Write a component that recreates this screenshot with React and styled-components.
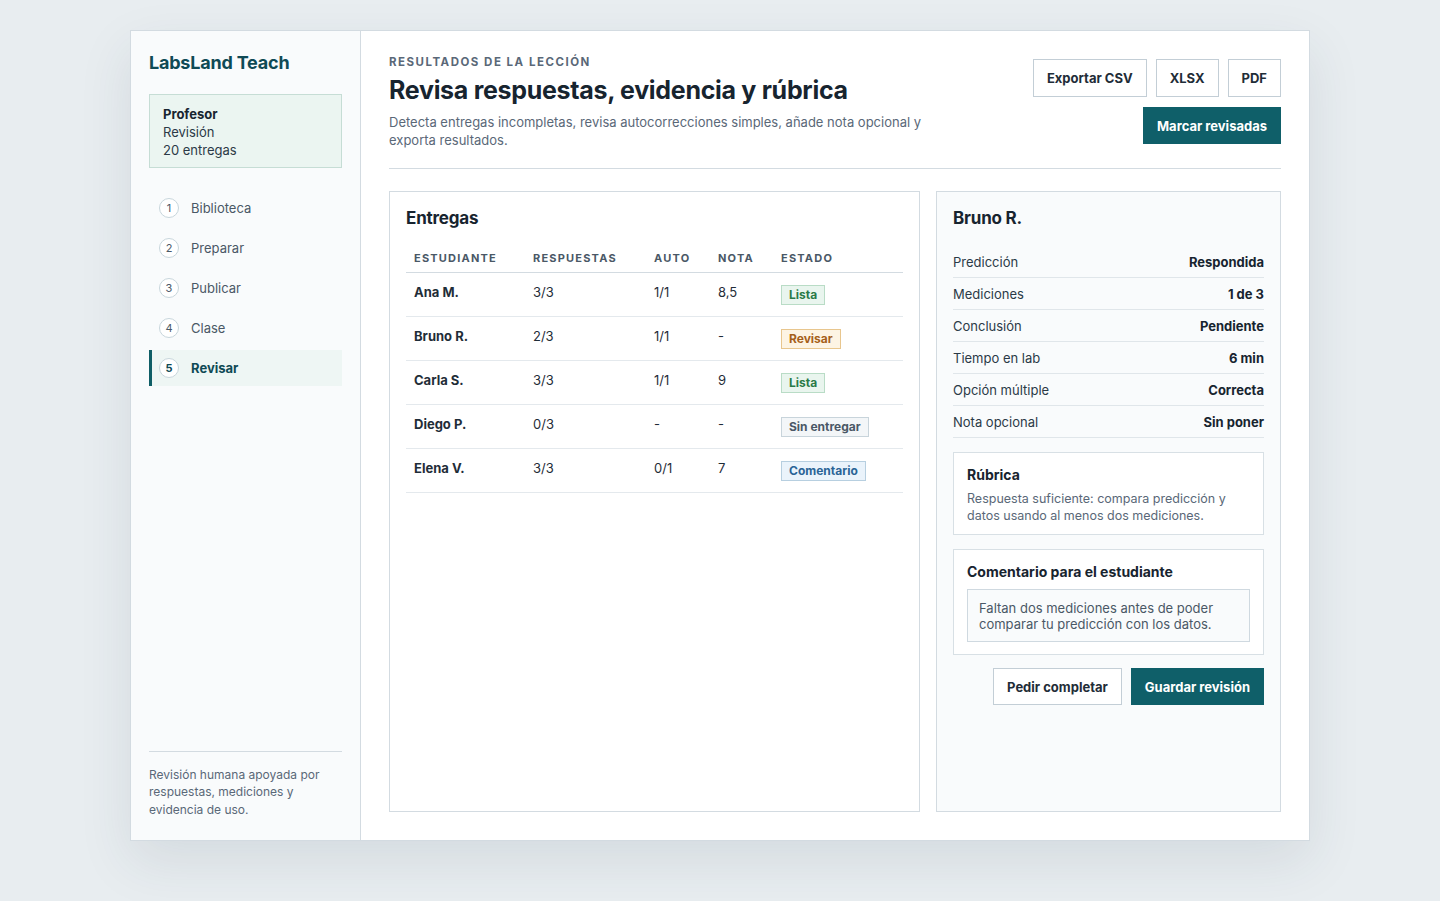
import styled, { createGlobalStyle } from 'styled-components'

const GlobalStyle = createGlobalStyle`
  * { box-sizing: border-box; }
  body {
    margin: 0;
    background: #e8edf0;
    font-family: Inter, "Noto Sans", "Liberation Sans", sans-serif;
    color: #17242f;
  }
`

const Page = styled.div`
  min-height: 901px;
  padding: 30px 130px 61px;
`

const Frame = styled.div`
  display: grid;
  grid-template-columns: 230px 1fr;
  height: 811px;
  background: #fff;
  border: 1px solid #d3dbe1;
  box-shadow: 0 20px 50px rgba(40, 60, 80, 0.1);
`

const Sidebar = styled.aside`
  display: flex;
  flex-direction: column;
  background: #f9fbfc;
  border-right: 1px solid #d3dbe1;
  padding: 20px 18px 22px;
`

const Logo = styled.div`
  font-size: 18px;
  font-weight: 700;
  color: #0f4a55;
  letter-spacing: -0.2px;
  line-height: 24px;
`

const RoleBox = styled.div`
  margin-top: 19px;
  padding: 10px 13px 8px;
  background: #ebf5f1;
  border: 1px solid #c6ddd5;
  font-size: 13px;
  line-height: 18px;
  color: #2b3a47;

  strong {
    display: block;
    color: #17242f;
  }
`

const Nav = styled.nav`
  display: flex;
  flex-direction: column;
  margin-top: 22px;
`

const NavItem = styled.div`
  display: flex;
  align-items: center;
  gap: 12px;
  height: 36px;
  margin-bottom: 4px;
  padding-left: ${p => (p.$active ? '7px' : '10px')};
  border-left: ${p => (p.$active ? '3px solid #0f5e66' : 'none')};
  background: ${p => (p.$active ? '#eef6f4' : 'transparent')};
  font-size: 13px;
  font-weight: ${p => (p.$active ? 700 : 400)};
  color: ${p => (p.$active ? '#0f4a55' : '#4a5866')};
`

const StepDot = styled.span`
  display: inline-flex;
  align-items: center;
  justify-content: center;
  width: 20px;
  height: 20px;
  border-radius: 50%;
  border: 1px solid #c8d6dc;
  background: #fff;
  font-size: 11px;
  font-weight: ${p => (p.$active ? 700 : 400)};
  color: ${p => (p.$active ? '#0f4a55' : '#4a5866')};
`

const SideFoot = styled.div`
  margin-top: auto;
  padding-top: 14px;
  border-top: 1px solid #d3dbe1;
  font-size: 12px;
  line-height: 17.5px;
  color: #5a6878;
`

const Main = styled.main`
  display: flex;
  flex-direction: column;
  padding: 23px 28px 28px;
  min-width: 0;
`

const Header = styled.header`
  display: flex;
  justify-content: space-between;
  align-items: flex-start;
  padding-bottom: 19px;
  border-bottom: 1px solid #d3dbe1;
`

const Eyebrow = styled.div`
  font-size: 11.5px;
  font-weight: 700;
  letter-spacing: 1.5px;
  color: #5a6878;
  line-height: 16px;
`

const Title = styled.h1`
  margin: 5px 0 8px;
  font-size: 25px;
  font-weight: 700;
  letter-spacing: -0.3px;
  line-height: 30px;
  color: #17242f;
`

const Lead = styled.p`
  margin: 0;
  max-width: 540px;
  font-size: 13px;
  line-height: 18px;
  color: #5a6878;
`

const Actions = styled.div`
  display: flex;
  flex-direction: column;
  align-items: flex-end;
  gap: 10px;
  margin-top: 5px;
`

const ButtonRow = styled.div`
  display: flex;
  gap: 9px;
`

const Button = styled.button`
  height: ${p => (p.$tall ? '38px' : '37px')};
  padding: 0 13px;
  font-family: inherit;
  font-size: 13px;
  font-weight: 700;
  border: 1px solid ${p => (p.$primary ? '#0f5f69' : '#c3ced6')};
  background: ${p => (p.$primary ? '#0f5f69' : '#fff')};
  color: ${p => (p.$primary ? '#fff' : '#1f2d38')};
  cursor: pointer;
`

const Panels = styled.div`
  flex: 1;
  display: grid;
  grid-template-columns: 1fr 345px;
  gap: 16px;
  margin-top: 22px;
  min-height: 0;
`

const Panel = styled.section`
  border: 1px solid #d3dbe1;
  background: ${p => (p.$tint ? '#f9fbfc' : '#fff')};
  padding: 14px 16px;
`

const PanelTitle = styled.h2`
  margin: 0 0 ${p => p.$gap || '13px'};
  font-size: 17px;
  font-weight: 700;
  line-height: 24px;
  letter-spacing: -0.2px;
  color: #17242f;
`

const Table = styled.table`
  width: 100%;
  border-collapse: collapse;
  table-layout: fixed;
`

const Th = styled.th`
  text-align: left;
  padding: 8px 8px 7px;
  font-size: 11px;
  font-weight: 700;
  letter-spacing: 1.2px;
  color: #4a5866;
  border-bottom: 1px solid #d3dbe1;
  width: ${p => p.$w};
`

const Td = styled.td`
  height: 44px;
  padding: 0 8px 6px;
  font-size: 13px;
  font-weight: ${p => (p.$bold ? 700 : 400)};
  color: #1f2d38;
  border-bottom: 1px solid #e4e9ed;
  vertical-align: middle;
`

const badgeTones = {
  ok: { bg: '#e9f5ee', border: '#b9dcc6', color: '#2a7a47' },
  warn: { bg: '#fdf4e4', border: '#e8c68e', color: '#a5601a' },
  none: { bg: '#f3f6f8', border: '#c8d4db', color: '#4a5866' },
  note: { bg: '#eaf3fb', border: '#b7cfe0', color: '#2a6496' },
}

const Badge = styled.span`
  display: inline-block;
  position: relative;
  top: 3px;
  padding: 0 7px;
  height: 20px;
  line-height: 18px;
  font-size: 12px;
  font-weight: 700;
  border: 1px solid ${p => badgeTones[p.$tone].border};
  background: ${p => badgeTones[p.$tone].bg};
  color: ${p => badgeTones[p.$tone].color};
`

const DetailList = styled.div`
  display: flex;
  flex-direction: column;
`

const DetailRow = styled.div`
  display: flex;
  justify-content: space-between;
  align-items: center;
  height: 32px;
  border-bottom: 1px solid #e0e6ea;
  font-size: 13px;
  color: #2b3a47;

  b {
    color: #17242f;
  }
`

const Card = styled.div`
  margin-top: 14px;
  padding: 12px 13px ${p => p.$pb || '10px'};
  background: #fff;
  border: 1px solid #d8e0e5;
`

const CardTitle = styled.h3`
  margin: 0 0 5px;
  font-size: 14px;
  font-weight: 700;
  line-height: 20px;
  color: #17242f;
`

const CardText = styled.p`
  margin: 0;
  font-size: 12.5px;
  line-height: 17px;
  color: #5a6878;
`

const TextArea = styled.div`
  margin-top: 7px;
  padding: 10px 11px 9px;
  background: #f9fbfc;
  border: 1px solid #cfd9e0;
  font-size: 13px;
  line-height: 16px;
  color: #4a5866;
`

const FormActions = styled.div`
  display: flex;
  justify-content: flex-end;
  gap: 9px;
  margin-top: 13px;
`

const steps = ['Biblioteca', 'Preparar', 'Publicar', 'Clase', 'Revisar']

const rows = [
  { name: 'Ana M.', resp: '3/3', auto: '1/1', nota: '8,5', estado: 'Lista', tone: 'ok' },
  { name: 'Bruno R.', resp: '2/3', auto: '1/1', nota: '-', estado: 'Revisar', tone: 'warn' },
  { name: 'Carla S.', resp: '3/3', auto: '1/1', nota: '9', estado: 'Lista', tone: 'ok' },
  { name: 'Diego P.', resp: '0/3', auto: '-', nota: '-', estado: 'Sin entregar', tone: 'none' },
  { name: 'Elena V.', resp: '3/3', auto: '0/1', nota: '7', estado: 'Comentario', tone: 'note' },
]

const details = [
  ['Predicción', 'Respondida'],
  ['Mediciones', '1 de 3'],
  ['Conclusión', 'Pendiente'],
  ['Tiempo en lab', '6 min'],
  ['Opción múltiple', 'Correcta'],
  ['Nota opcional', 'Sin poner'],
]

const App = () => (
  <Page>
    <GlobalStyle />
    <Frame>
      <Sidebar>
        <Logo>LabsLand Teach</Logo>
        <RoleBox>
          <strong>Profesor</strong>
          Revisión
          <br />
          20 entregas
        </RoleBox>
        <Nav>
          {steps.map((step, i) => {
            const active = i === steps.length - 1
            return (
              <NavItem key={step} $active={active}>
                <StepDot $active={active}>{i + 1}</StepDot>
                {step}
              </NavItem>
            )
          })}
        </Nav>
        <SideFoot>
          Revisión humana apoyada por respuestas, mediciones y evidencia de uso.
        </SideFoot>
      </Sidebar>

      <Main>
        <Header>
          <div>
            <Eyebrow>RESULTADOS DE LA LECCIÓN</Eyebrow>
            <Title>Revisa respuestas, evidencia y rúbrica</Title>
            <Lead>
              Detecta entregas incompletas, revisa autocorrecciones simples, añade nota opcional y
              exporta resultados.
            </Lead>
          </div>
          <Actions>
            <ButtonRow>
              <Button $tall>Exportar CSV</Button>
              <Button $tall>XLSX</Button>
              <Button $tall>PDF</Button>
            </ButtonRow>
            <Button $primary>Marcar revisadas</Button>
          </Actions>
        </Header>

        <Panels>
          <Panel>
            <PanelTitle>Entregas</PanelTitle>
            <Table>
              <thead>
                <tr>
                  <Th $w="119px">ESTUDIANTE</Th>
                  <Th $w="121px">RESPUESTAS</Th>
                  <Th $w="64px">AUTO</Th>
                  <Th $w="63px">NOTA</Th>
                  <Th>ESTADO</Th>
                </tr>
              </thead>
              <tbody>
                {rows.map(r => (
                  <tr key={r.name}>
                    <Td $bold>{r.name}</Td>
                    <Td>{r.resp}</Td>
                    <Td>{r.auto}</Td>
                    <Td>{r.nota}</Td>
                    <Td>
                      <Badge $tone={r.tone}>{r.estado}</Badge>
                    </Td>
                  </tr>
                ))}
              </tbody>
            </Table>
          </Panel>

          <Panel $tint>
            <PanelTitle $gap="16px">Bruno R.</PanelTitle>
            <DetailList>
              {details.map(([k, v]) => (
                <DetailRow key={k}>
                  <span>{k}</span>
                  <b>{v}</b>
                </DetailRow>
              ))}
            </DetailList>
            <Card>
              <CardTitle>Rúbrica</CardTitle>
              <CardText>
                Respuesta suficiente: compara predicción y datos usando al menos dos mediciones.
              </CardText>
            </Card>
            <Card $pb="12px">
              <CardTitle>Comentario para el estudiante</CardTitle>
              <TextArea>
                Faltan dos mediciones antes de poder comparar tu predicción con los datos.
              </TextArea>
            </Card>
            <FormActions>
              <Button>Pedir completar</Button>
              <Button $primary>Guardar revisión</Button>
            </FormActions>
          </Panel>
        </Panels>
      </Main>
    </Frame>
  </Page>
)

export default App
